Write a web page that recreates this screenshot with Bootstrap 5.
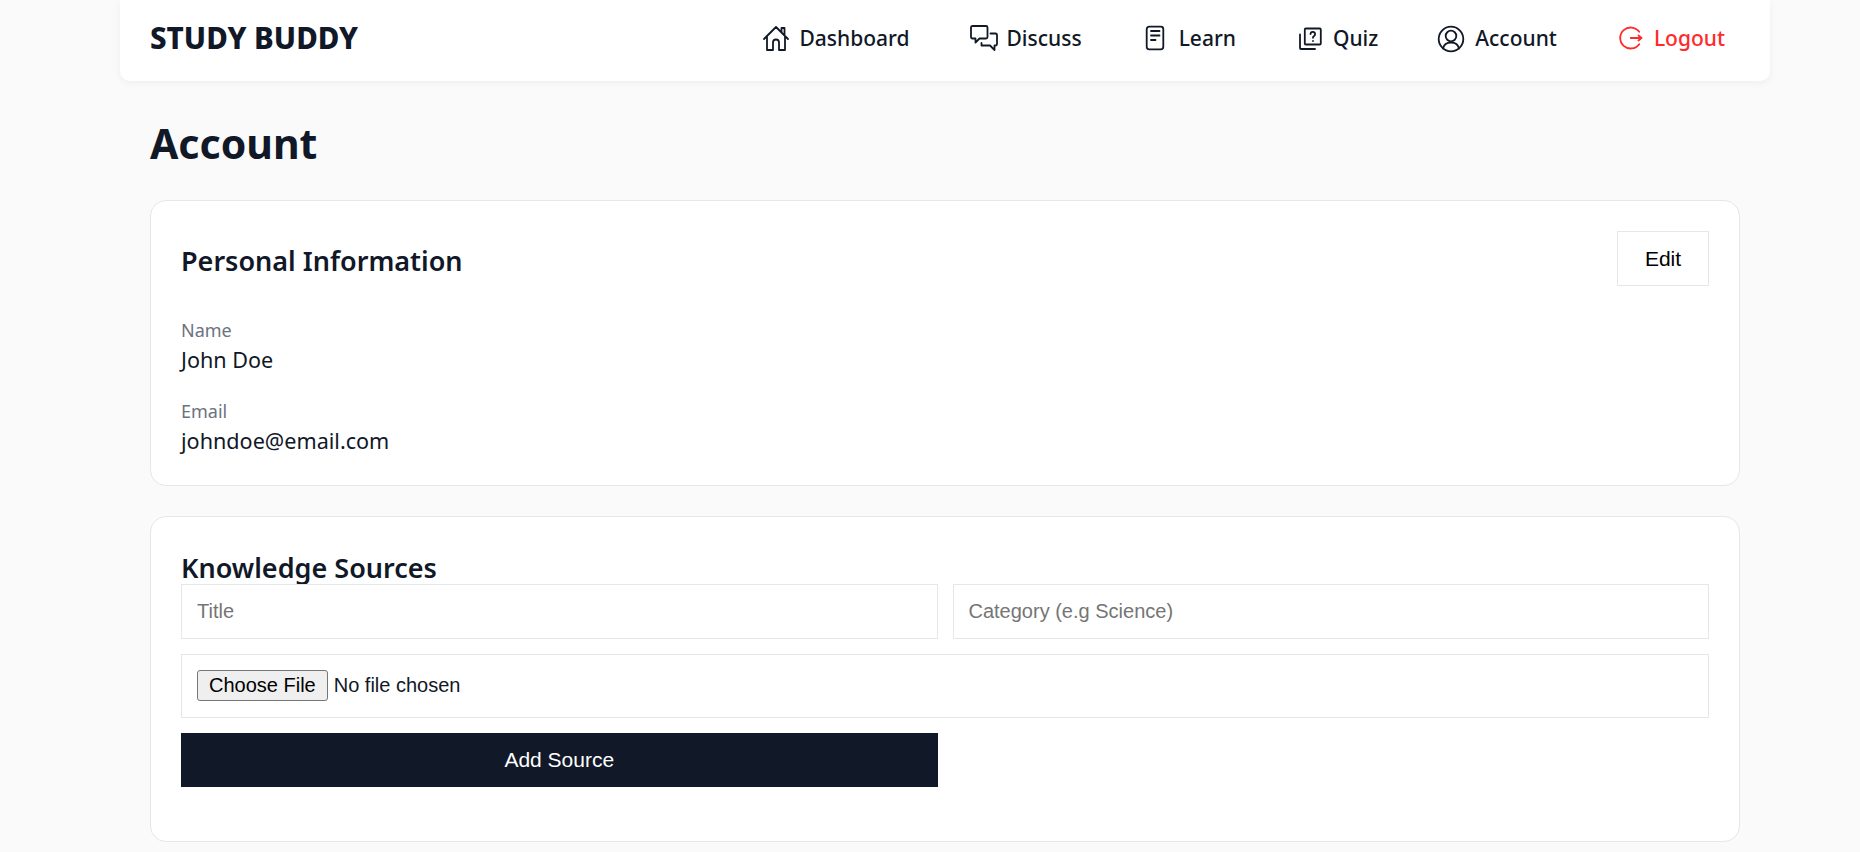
<!DOCTYPE html>
<html lang="en">
<head>
  <meta charset="UTF-8" />
  <meta name="viewport" content="width=device-width, initial-scale=1" />
  <title>Study Buddy - Account</title>
  <link href="https://cdn.jsdelivr.net/npm/bootstrap@5.3.0/dist/css/bootstrap.min.css" rel="stylesheet" />
  <style>
    body {
      background: #fafafa;
      color: #111827;
      font-family: "Noto Sans", sans-serif;
    }

    .page-wrap {
      width: 1650px;
      margin-left: 120px;
    }

    .top-nav {
      height: 81px;
      padding: 0 30px 4px;
      background: #fff;
      border-radius: 0 0 10px 10px;
      box-shadow: 0 2px 8px rgba(0,0,0,0.05);
    }

    .brand-name {
      font-size: 29.5px;
      font-weight: 800;
      color: #111827;
      text-decoration: none;
    }

    .nav-list { gap: 31px; }

    .nav-item-link {
      display: flex;
      align-items: center;
      gap: 8px;
      padding: 0 15px;
      font-size: 21px;
      font-weight: 500;
      color: #111827;
      text-decoration: none;
    }

    .nav-item-link svg {
      width: 28px;
      height: 28px;
      overflow: visible;
      fill: none;
      stroke: currentColor;
      stroke-width: 1.8;
      stroke-linecap: round;
      stroke-linejoin: round;
    }

    .nav-item-link.logout-link { color: #ff2a2a; }

    .page-body { padding: 0 30px; }

    .page-title {
      font-size: 41px;
      font-weight: 700;
      line-height: 1;
      margin: 42px 0 36px;
    }

    .panel-box {
      background: #fff;
      border: 1px solid #e5e7eb;
      border-radius: 16px;
      padding: 30px;
    }

    .panel-personal {
      padding-bottom: 29px;
      margin-bottom: 30px;
    }

    .panel-title {
      font-size: 27px;
      font-weight: 600;
      line-height: 32px;
      padding-top: 5px;
      margin: 0;
    }

    .info-block { margin-top: 24px; }
    .info-block-first { margin-top: 32px; }

    .info-label {
      font-size: 18px;
      color: #6b7280;
      line-height: 24px;
      margin-bottom: 3px;
    }

    .info-value {
      font-size: 21.6px;
      line-height: 30px;
    }

    .edit-btn {
      width: 92px;
      height: 55px;
      background: #fff;
      border: 1px solid #e5e7eb;
      border-radius: 0;
      font-family: "Liberation Sans", sans-serif;
      font-size: 21px;
      color: #000;
    }

    .text-input,
    .file-box {
      width: 100%;
      background: #fff;
      border: 1px solid #e5e7eb;
      font-family: "Liberation Sans", sans-serif;
      font-size: 20px;
    }

    .text-input {
      height: 55px;
      padding: 0 15px;
      outline: none;
    }

    .text-input::placeholder { color: #757575; }

    .file-box {
      height: 64px;
      padding: 15px;
      margin-top: 15px;
      display: block;
      line-height: 25px;
    }

    .file-box::file-selector-button {
      padding: 2px 11px;
      margin-right: 6px;
      line-height: 25px;
      background: #efefef;
      border: 1px solid #767676;
      border-radius: 3px;
    }

    .form-cols { gap: 15px; }
    .form-cols-last { margin-top: 15px; margin-bottom: 24px; }

    .add-btn {
      width: 100%;
      height: 54px;
      background: #111827;
      color: #fff;
      border: 0;
      border-radius: 0;
      font-family: "Liberation Sans", sans-serif;
      font-size: 21px;
    }
  </style>
</head>
<body>
  <div class="page-wrap">
    <nav class="top-nav d-flex align-items-center justify-content-between">
      <a href="#" class="brand-name">STUDY BUDDY</a>
      <div class="nav-list d-flex align-items-center">
        <a href="#" class="nav-item-link">
          <svg viewBox="0 0 28 28"><path d="M1 14 13 2l12 12M18.500 7V3h3v7.500M4 11.500V25h6v-7.500a3 3 0 0 1 6 0V25h6V11.500"/></svg>
          Dashboard
        </a>
        <a href="#" class="nav-item-link">
          <svg viewBox="0 0 28 28"><path d="M1.500 1H15a1.500 1.500 0 0 1 1.500 1.500V12a1.500 1.500 0 0 1-1.500 1.500H8.500l-4 4v-4h-3A1.500 1.500 0 0 1 0 12V2.500A1.500 1.500 0 0 1 1.500 1ZM19.500 8.500h5a1.500 1.500 0 0 1 1.500 1.500v9a1.500 1.500 0 0 1-1.500 1.500h-1V25L19 20.500h-8.500V18"/></svg>
          Discuss
        </a>
        <a href="#" class="nav-item-link">
          <svg viewBox="0 0 28 28"><rect x="3.700" y="1.700" width="16.600" height="22.600" rx="2.500"/><path d="M8 6h8.500M8 10.500h8.500M8 15h4.500"/></svg>
          Learn
        </a>
        <a href="#" class="nav-item-link">
          <svg viewBox="0 0 28 28"><rect x="7.800" y="3.500" width="16" height="16" rx="1"/><path d="M3 9.500V23a1 1 0 0 0 1 1h14M13.500 9a2.300 2.300 0 1 1 3.600 2c-.8.500-1.100 1-1.100 1.800M16 16v.1"/></svg>
          Quiz
        </a>
        <a href="#" class="nav-item-link">
          <svg viewBox="0 0 28 28"><circle cx="12" cy="14" r="12.300"/><circle cx="12" cy="11" r="5.300"/><path d="M4 23.500c1-4.500 4-6 8-6s7 1.500 8 6"/></svg>
          Account
        </a>
        <a href="#" class="nav-item-link logout-link">
          <svg viewBox="0 0 28 28"><path d="M21.200 6.800a10.500 10.500 0 1 0 0 12.400M12.700 13h10.800M20.500 10.500l3 2.500-3 2.500"/></svg>
          Logout
        </a>
      </div>
    </nav>

    <div class="page-body">
      <h1 class="page-title">Account</h1>

      <section class="panel-box panel-personal">
        <div class="d-flex justify-content-between align-items-center">
          <h2 class="panel-title">Personal Information</h2>
          <button type="button" class="edit-btn">Edit</button>
        </div>
        <div class="info-block-first">
          <div class="info-label">Name</div>
          <div class="info-value">John Doe</div>
        </div>
        <div class="info-block">
          <div class="info-label">Email</div>
          <div class="info-value">johndoe@email.com</div>
        </div>
      </section>

      <section class="panel-box">
        <h2 class="panel-title">Knowledge Sources</h2>
        <form>
          <div class="d-flex form-cols">
            <div class="flex-fill w-50"><input type="text" class="text-input" placeholder="Title" /></div>
            <div class="flex-fill w-50"><input type="text" class="text-input" placeholder="Category (e.g Science)" /></div>
          </div>
          <input type="file" class="file-box" />
          <div class="d-flex form-cols form-cols-last">
            <div class="flex-fill w-50"><button type="button" class="add-btn">Add Source</button></div>
            <div class="flex-fill w-50"></div>
          </div>
        </form>
      </section>
    </div>
  </div>
  <script src="https://cdn.jsdelivr.net/npm/bootstrap@5.3.0/dist/js/bootstrap.bundle.min.js"></script>
</body>
</html>
